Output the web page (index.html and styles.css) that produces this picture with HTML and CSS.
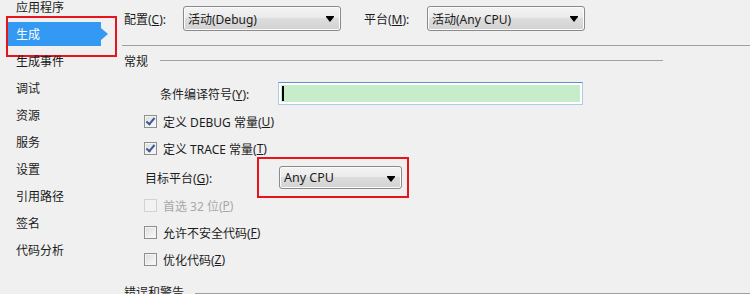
FILE: index.html
```html
<!DOCTYPE html>
<html lang="zh-CN">
<head>
  <meta charset="UTF-8">
  <title>项目属性 - 生成</title>
  <link rel="stylesheet" href="styles.css">
</head>
<body>

  <div class="window">
    <ul class="nav">
      <li>应用程序</li>
      <li class="active">生成<span class="mark"></span></li>
      <li>生成事件</li>
      <li>调试</li>
      <li>资源</li>
      <li>服务</li>
      <li>设置</li>
      <li>引用路径</li>
      <li>签名</li>
      <li>代码分析</li>
    </ul>

    <div class="main">
      <div class="toolbar">
        <span class="lbl-config">配置(<u>C</u>):</span>
        <div class="combo combo-wide">活动(Debug)<span class="arrow"></span></div>
        <span class="lbl-platform">平台(<u>M</u>):</span>
        <div class="combo combo-wide">活动(Any CPU)<span class="arrow"></span></div>
      </div>
      <div class="rule"></div>

      <div class="group">
        <span>常规</span>
        <div class="group-line"></div>
      </div>

      <div class="row row-symbols">
        <span class="lbl-symbols">条件编译符号(<u>Y</u>):</span>
        <div class="textbox"><span class="caret"></span></div>
      </div>

      <div class="row check"><span class="box checked"></span>定义 DEBUG 常量(<u>U</u>)</div>
      <div class="row check"><span class="box checked"></span>定义 TRACE 常量(<u>T</u>)</div>

      <div class="row row-target">
        <span class="lbl-target">目标平台(<u>G</u>):</span>
        <div class="combo combo-small">Any CPU<span class="arrow"></span><span class="mark"></span></div>
      </div>

      <div class="row check disabled"><span class="box"></span>首选 32 位(<u>P</u>)</div>
      <div class="row check"><span class="box"></span>允许不安全代码(<u>F</u>)</div>
      <div class="row check"><span class="box"></span>优化代码(<u>Z</u>)</div>

      <div class="group group-errors">
        <span>错误和警告</span>
        <div class="group-line"></div>
      </div>
    </div>
  </div>

</body>
</html>
```

FILE: styles.css
```css
body {
  margin: 0;
  background: #f0f0f0;
  font-family: "Noto Sans", "Noto Sans CJK SC", sans-serif;
  font-size: 12px;
  color: #1b1b1b;
  overflow: hidden;
}

u {
  text-decoration: underline;
  text-underline-offset: 1px;
}

.window {
  display: flex;
  height: 294px;
}

/* left navigation */
.nav {
  list-style: none;
  margin: -6px 0 0 0;
  padding: 0;
  width: 116px;
  flex-shrink: 0;
}

.nav li {
  height: 27px;
  line-height: 27px;
  padding-left: 16px;
  position: relative;
  white-space: nowrap;
}

.nav li.active {
  color: #fff;
  z-index: 0;
}

.nav li.active::before {
  content: "";
  position: absolute;
  left: 7px;
  top: 1px;
  width: 94px;
  height: 24px;
  background: #3399f3;
  z-index: -1;
}

.nav li.active::after {
  content: "";
  position: absolute;
  left: 101px;
  top: 7px;
  border-left: 7px solid #3399f3;
  border-top: 6px solid transparent;
  border-bottom: 6px solid transparent;
}

/* red annotation boxes */
.mark {
  position: absolute;
  border: 2px solid #e8141b;
  box-sizing: border-box;
}

.nav .mark {
  left: 6px;
  top: -5px;
  width: 111px;
  height: 41px;
}

.combo .mark {
  left: -23px;
  top: -10px;
  width: 152px;
  height: 41px;
}

/* main area */
.main {
  flex: 1;
  padding-left: 8px;
}

.toolbar {
  display: flex;
  align-items: center;
  margin-top: 6px;
  height: 25px;
  white-space: nowrap;
}

.lbl-config {
  width: 59px;
}

.lbl-platform {
  width: 63px;
  margin-left: 23px;
}

.combo {
  position: relative;
  box-sizing: border-box;
  border: 1px solid #8a8a8a;
  border-radius: 3px;
  background: linear-gradient(#f3f3f3 0%, #ebebeb 45%, #dddddd 50%, #d2d2d2 100%);
  box-shadow: inset 0 0 0 1px #fcfcfc;
  padding-left: 4px;
  display: flex;
  align-items: center;
}

.combo-wide {
  width: 158px;
  height: 25px;
}

.combo-small {
  width: 123px;
  height: 23px;
  font-size: 12.5px;
}

.arrow {
  position: absolute;
  right: 6px;
  top: 10px;
  width: 0;
  height: 0;
  border-left: 4px solid transparent;
  border-right: 4px solid transparent;
  border-top: 5px solid #000;
}

.arrow::before {
  content: "";
  position: absolute;
  left: -4px;
  top: -6px;
  width: 8px;
  height: 1px;
  background: #000;
}

.rule {
  height: 1px;
  background: #a0a0a0;
  margin: 14px 0 0 -2px;
}

.group {
  display: flex;
  align-items: center;
  height: 20px;
  margin-top: 5px;
  white-space: nowrap;
}

.group-line {
  flex-shrink: 0;
  height: 1px;
  background: #a0a0a0;
  width: 503px;
  margin-left: 12px;
  margin-top: -2px;
}

.row {
  display: flex;
  align-items: center;
  white-space: nowrap;
}

.row-symbols {
  margin-top: 11px;
  height: 23px;
  padding-left: 36px;
}

.lbl-symbols {
  width: 118px;
}

.textbox {
  box-sizing: border-box;
  width: 305px;
  height: 23px;
  border: 1px solid #abcdea;
  border-top-color: #5e8fc6;
  background: #c7ecca;
  box-shadow: inset 0 0 0 2px #fff;
  position: relative;
}

.caret {
  position: absolute;
  left: 3px;
  top: 3px;
  width: 2px;
  height: 15px;
  background: #000;
}

.check {
  height: 27px;
  padding-left: 20px;
}

.row-symbols + .check {
  margin-top: 3px;
}

.box {
  box-sizing: border-box;
  width: 13px;
  height: 13px;
  border: 1px solid #8e8f8f;
  background: linear-gradient(135deg, #dcdcdc, #fbfbfb);
  box-shadow: inset 0 0 0 1px #f4f4f4;
  margin-right: 6px;
  position: relative;
}

.box.checked::after {
  content: "";
  position: absolute;
  left: 3px;
  top: 0;
  width: 3px;
  height: 7px;
  border-right: 2px solid #3c5a98;
  border-bottom: 2px solid #3c5a98;
  transform: rotate(40deg);
}

.disabled {
  color: #a8a8a8;
}

.disabled .box {
  border-color: #d2d2d2;
  background: #f2f2f2;
  box-shadow: none;
}

.row-target {
  height: 35px;
  padding-left: 21px;
  margin-top: -2px;
  margin-bottom: -3px;
}

.lbl-target {
  width: 134px;
}

.group-errors {
  margin-top: 9px;
}

.group-errors .group-line {
  width: 560px;
  margin-top: 2px;
  margin-left: 11px;
}
```
